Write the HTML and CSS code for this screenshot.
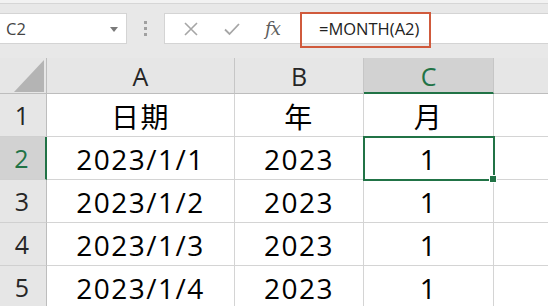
FILE: index.html
```html
<!DOCTYPE html>
<html lang="zh">
<head>
<meta charset="utf-8">
<link rel="stylesheet" href="styles.css">
</head>
<body>
<div class="toolbar">
  <div class="namebox">
    <span class="ref">C2</span>
    <svg class="caret" width="8" height="5" viewBox="0 0 8 5"><path d="M0 0H8L4 5Z" fill="#7a7a7a"/></svg>
  </div>
  <div class="grip"><i></i><i></i><i></i></div>
  <div class="fbar">
    <div class="ficons">
      <svg class="ico" width="14" height="14" viewBox="0 0 14 14"><path d="M1 1L13 13M13 1L1 13" stroke="#a6a6a6" stroke-width="1.6" fill="none"/></svg>
      <svg class="ico" width="16" height="14" viewBox="0 0 16 14"><path d="M1 7.5L5.5 12L15 2" stroke="#a6a6a6" stroke-width="1.8" fill="none"/></svg>
      <span class="fx">fx</span>
    </div>
    <div class="formula">=MONTH(A2)</div>
    <div class="mark"></div>
  </div>
</div>
<div class="sheet">
  <div class="corner"><svg width="30" height="32" viewBox="0 0 30 32"><path d="M0 32H30V0Z" fill="#b4b4b4"/></svg></div>
  <div class="ch">A</div>
  <div class="ch">B</div>
  <div class="ch sel">C</div>
  <div class="ch last"></div>

  <div class="rh">1</div>
  <div class="c">日期</div>
  <div class="c">年</div>
  <div class="c">月</div>
  <div class="c last"></div>

  <div class="rh sel">2</div>
  <div class="c">2023/1/1</div>
  <div class="c">2023</div>
  <div class="c active">1</div>
  <div class="c last"></div>

  <div class="rh">3</div>
  <div class="c">2023/1/2</div>
  <div class="c">2023</div>
  <div class="c">1</div>
  <div class="c last"></div>

  <div class="rh">4</div>
  <div class="c">2023/1/3</div>
  <div class="c">2023</div>
  <div class="c">1</div>
  <div class="c last"></div>

  <div class="rh">5</div>
  <div class="c">2023/1/4</div>
  <div class="c">2023</div>
  <div class="c">1</div>
  <div class="c last"></div>
</div>
</body>
</html>
```
FILE: styles.css
```css
* { box-sizing: border-box; }
html, body { margin: 0; padding: 0; }
body {
  width: 548px;
  height: 306px;
  overflow: hidden;
  background: #ffffff;
  font-family: "Open Sans", "Noto Sans CJK SC", sans-serif;
}
.toolbar {
  height: 58px;
  background: #e8e8e8;
  border-top: 3px solid #f2f2f2;
  display: flex;
  align-items: flex-start;
  padding-top: 10px;
  position: relative;
}
.toolbar::before {
  content: "";
  position: absolute;
  left: 0; right: 0; top: 0;
  height: 1px;
  background: #d6d6d6;
}
.namebox {
  width: 127px;
  height: 31px;
  background: #fff;
  border: 1px solid #d4d4d4;
  border-left: none;
  display: flex;
  align-items: center;
  justify-content: space-between;
  padding: 0 8px 0 6px;
}
.ref { font-size: 16.5px; color: #444; font-family: "Open Sans", sans-serif; }
.caret { margin-top: 1px; }
.grip {
  width: 37px;
  height: 31px;
  display: flex;
  flex-direction: column;
  align-items: center;
  justify-content: center;
  gap: 3px;
}
.grip i { display: block; width: 3px; height: 3px; background: #a0a0a0; }
.fbar {
  flex: 1;
  height: 31px;
  background: #fff;
  border: 1px solid #d4d4d4;
  border-right: none;
  display: flex;
  align-items: center;
  position: relative;
}
.ficons {
  width: 135px;
  display: flex;
  align-items: center;
  padding-left: 19px;
}
.ico:nth-child(1) { margin-right: 26px; }
.ico:nth-child(2) { margin-right: 25px; }
.fx {
  font-family: "DejaVu Serif", "Liberation Serif", serif;
  font-style: italic;
  font-size: 18px;
  color: #5e5e5e;
  letter-spacing: -1px;
}
.formula {
  padding-left: 19px;
  font-size: 16.5px;
  color: #222;
  font-family: "Open Sans", sans-serif;
}
.mark {
  position: absolute;
  left: 135px;
  top: -2px;
  width: 131px;
  height: 36px;
  border: 2.5px solid #d05a3c;
}
.sheet {
  display: grid;
  grid-template-columns: 47px 188px 129px 130px 1fr;
  grid-template-rows: 36px repeat(5, 43px);
  background: #fff;
}
.corner {
  background: #e6e6e6;
  border-right: 1px solid #bdbdbd;
  border-bottom: 1px solid #bdbdbd;
  display: flex;
  align-items: flex-end;
  justify-content: flex-end;
  padding: 0 2px 1px 0;
}
.ch {
  background: #e6e6e6;
  border-right: 1px solid #c6c6c6;
  border-bottom: 1px solid #bdbdbd;
  display: flex;
  align-items: center;
  justify-content: center;
  font-size: 25px;
  color: #262626;
  padding-top: 1px;
}
.ch.last { border-right: none; }
.ch.sel {
  background: #d2d2d2;
  color: #217346;
  border-bottom: 2px solid #217346;
}
.rh {
  background: #e6e6e6;
  border-right: 1px solid #bdbdbd;
  border-bottom: 1px solid #d0d0d0;
  display: flex;
  align-items: center;
  justify-content: center;
  font-size: 25px;
  color: #262626;
  padding-right: 2px;
}
.rh.sel {
  background: #d2d2d2;
  color: #217346;
  border-right: 2px solid #217346;
}
.c {
  border-right: 1px solid #d4d4d4;
  border-bottom: 1px solid #d4d4d4;
  display: flex;
  align-items: center;
  justify-content: center;
  font-size: 28px;
  letter-spacing: 1.5px;
  color: #000;
  padding-top: 2px;
}
.c.last { border-right: none; }
.c.active { position: relative; }
.c.active::after {
  content: "";
  position: absolute;
  left: -1px; top: -1px; right: -2px; bottom: -2px;
  border: 2px solid #217346;
}
.c.active::before {
  content: "";
  position: absolute;
  right: -4px;
  bottom: -4px;
  width: 6px;
  height: 6px;
  background: #217346;
  border: 1px solid #fff;
  z-index: 2;
}
```
